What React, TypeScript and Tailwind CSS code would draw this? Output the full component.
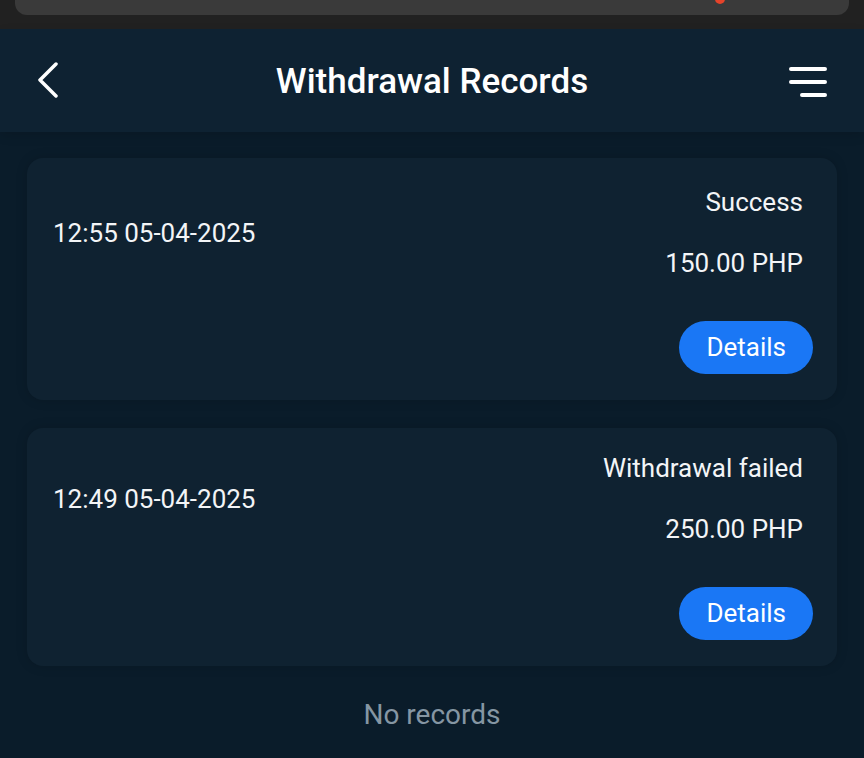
import React from "react";

interface WithdrawalRecord {
  time: string;
  status: string;
  amount: string;
}

const records: WithdrawalRecord[] = [
  { time: "12:55 05-04-2025", status: "Success", amount: "150.00 PHP" },
  { time: "12:49 05-04-2025", status: "Withdrawal failed", amount: "250.00 PHP" },
];

const RecordCard: React.FC<{ record: WithdrawalRecord; first: boolean }> = ({ record, first }) => (
  <div
    className={`rounded-2xl bg-[#0f2231] pb-[26px] pl-[26px] pr-[24px] shadow-[0_0_12px_rgba(0,0,0,0.15)] ${
      first ? "pt-[28px]" : "pt-[24px]"
    }`}
  >
    <div className="flex items-center justify-between">
      <span className="text-[26px] leading-[32px] text-[#f3f5f7]">{record.time}</span>
      <div className="flex flex-col items-end gap-[29px] pr-[10px]">
        <span className="text-[26px] leading-[32px] text-[#f3f5f7]">{record.status}</span>
        <span className="text-[26px] leading-[32px] text-[#f3f5f7]">{record.amount}</span>
      </div>
    </div>
    <div className="mt-[42px] flex justify-end">
      <button className="h-[53px] rounded-full bg-[#1a77f5] px-[27px] text-[26px] text-white">
        Details
      </button>
    </div>
  </div>
);

export default function App() {
  return (
    <div
      className="flex h-[758px] w-[864px] flex-col overflow-hidden bg-[#0a1c2a]"
      style={{ fontFamily: "Roboto, 'Noto Sans', sans-serif" }}
    >
      {/* system strip */}
      <div className="h-[29px] shrink-0 bg-[#212121] px-[15px]">
        <div className="relative h-[15px] rounded-b-[12px] bg-[#3a3a3a]">
          <span className="absolute left-[700px] top-[-6px] h-[10px] w-[10px] rounded-full bg-[#e5432a]" />
        </div>
      </div>

      {/* header */}
      <div className="grid h-[103px] shrink-0 grid-cols-[1fr_auto_1fr] items-center bg-[#0e2232] px-[37px] shadow-[0_4px_10px_rgba(0,0,0,0.12)]">
        <svg width="22" height="36" viewBox="0 0 22 36" fill="none" className="mt-[-1px]">
          <path d="M19 2L3 18l16 16" stroke="white" strokeWidth="3.5" strokeLinecap="round" strokeLinejoin="round" />
        </svg>
        <h1 className="mt-[4px] text-[35px] font-medium text-white">Withdrawal Records</h1>
        <svg width="38" height="32" viewBox="0 0 38 32" fill="none" className="mt-[2px] justify-self-end">
          <path d="M2 3h34M2 16h34M13 29h23" stroke="white" strokeWidth="4" strokeLinecap="round" />
        </svg>
      </div>

      {/* list */}
      <div className="flex flex-col gap-[28px] px-[27px] pt-[26px]">
        {records.map((r, i) => (
          <RecordCard key={r.time} record={r} first={i === 0} />
        ))}
        <p className="mt-[6px] text-center text-[28px] leading-[30px] text-[#8596a3]">No records</p>
      </div>
    </div>
  );
}
